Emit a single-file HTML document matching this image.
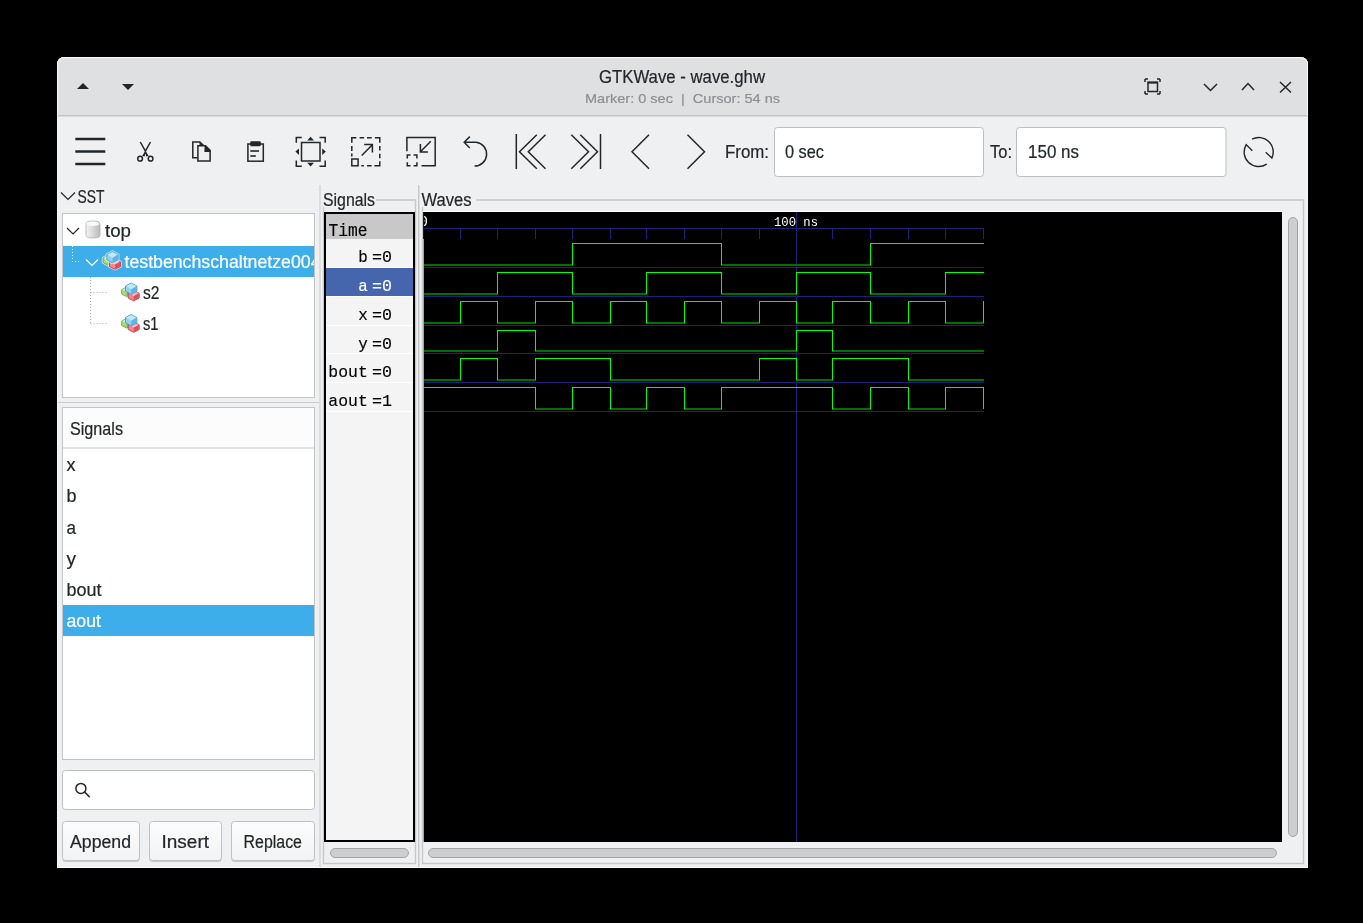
<!DOCTYPE html>
<html><head><meta charset="utf-8"><title>GTKWave</title>
<style>html,body{margin:0;padding:0;background:#000;width:1363px;height:923px;overflow:hidden}svg{display:block;will-change:transform}</style>
</head><body>
<svg width="1363" height="923" viewBox="0 0 1363 923" shape-rendering="auto">
<rect x="0" y="0" width="1363" height="923" fill="#000" />
<path d="M57,868 L57,65 Q57,57 65,57 L1300,57 Q1308,57 1308,65 L1308,868 Z" fill="#eff0f1"/>
<path d="M57,116 L57,65 Q57,57 65,57 L1300,57 Q1308,57 1308,65 L1308,116 Z" fill="#dfe0e2"/>
<rect x="57" y="115" width="1251" height="1.5" fill="#c4c5c7" />
<path d="M57.5,116 L57.5,65 Q57.5,57.5 65,57.5 L1300,57.5 Q1307.5,57.5 1307.5,65 L1307.5,116" fill="none" stroke="#ffffff" stroke-opacity="0.85"/>
<path d="M57.5,117 V868 M1307.5,117 V868" fill="none" stroke="#ffffff" stroke-opacity="0.5"/>
<path d="M77,89 L89,89 L83,83 Z" fill="#232629"/>
<path d="M122,84 L134,84 L128,90 Z" fill="#232629"/>
<text x="599" y="83" font-family='"Liberation Sans", sans-serif' font-size="17.5" fill="#232629" textLength="166" lengthAdjust="spacingAndGlyphs"  stroke="#232629" stroke-width="0.2" xml:space="preserve">GTKWave - wave.ghw</text>
<text x="585" y="103" font-family='"Liberation Sans", sans-serif' font-size="13.5" fill="#8c8e90" textLength="195" lengthAdjust="spacingAndGlyphs"  stroke="#8c8e90" stroke-width="0.2" xml:space="preserve">Marker: 0 sec  |  Cursor: 54 ns</text>
<rect x="1148" y="82.5" width="9.5" height="9" fill="none" stroke="#232629" stroke-width="1.5"/>
<rect x="1147.5" y="81.5" width="10.5" height="2" fill="#232629"/>
<path d="M1145,79 h3 M1145,79 v3 M1160,79 h-3 M1160,79 v3 M1145,94 h3 M1145,94 v-3 M1160,94 h-3 M1160,94 v-3" fill="none" stroke="#232629" stroke-width="1.5"/>
<path d="M1204,84 L1210.5,90.5 L1217,84" fill="none" stroke="#232629" stroke-width="1.5"/>
<path d="M1242,90 L1248,83.5 L1254,90" fill="none" stroke="#232629" stroke-width="1.5"/>
<path d="M1280,82 L1291,92.5 M1291,82 L1280,92.5" fill="none" stroke="#232629" stroke-width="1.5"/>
<rect x="57" y="867" width="1251" height="1" fill="#ffffff" />
<rect x="75.3" y="137.75" width="30" height="2.5" fill="#232629" />
<rect x="75.3" y="150.25" width="30" height="2.5" fill="#232629" />
<rect x="75.3" y="162.75" width="30" height="2.5" fill="#232629" />
<path d="M140.3,142 L145.4,151.2 L150.5,142" fill="none" stroke="#232629" stroke-width="1.5" stroke-linejoin="round"/>
<path d="M145.4,150.6 L148.6,156 L146.2,156.6 L145.4,153.6 L144.6,156.6 L142.2,156 Z" fill="#232629"/>
<circle cx="140.1" cy="158.7" r="2.35" fill="none" stroke="#232629" stroke-width="1.5"/><circle cx="150.6" cy="158.7" r="2.35" fill="none" stroke="#232629" stroke-width="1.5"/>
<path d="M197.5,157.7 L192.8,157.7 L192.8,141.9 L199.8,141.9 L203.5,145.6" fill="none" stroke="#232629" stroke-width="1.5"/>
<path d="M197.9,161.1 L197.9,145.8 L205.5,145.8 L210.1,150.4 L210.1,161.1 Z" fill="none" stroke="#232629" stroke-width="1.5"/>
<path d="M204.6,145 L210.9,151.3 L210.9,152 L204.4,152 Z" fill="#232629"/>
<path d="M199.5,141.2 L204.5,146 L199.5,146 Z" fill="#232629"/>
<rect x="247.9" y="144" width="15.4" height="17.2" fill="none" stroke="#232629" stroke-width="1.5"/>
<rect x="250.3" y="141.2" width="10.4" height="5" rx="1" fill="#232629"/>
<rect x="250.3" y="150.2" width="8.7" height="1.6" fill="#232629" />
<rect x="250.3" y="155.2" width="5.5" height="1.6" fill="#232629" />
<rect x="301.5" y="142.5" width="18.5" height="18.5" fill="none" stroke="#232629" stroke-width="1.5"/>
<path d="M296.3,142.8 V137.5 H301.8 M319.5,137.5 H325.2 V142.8 M296.3,160.4 V166.2 H301.8 M319.5,166.2 H325.2 V160.4" fill="none" stroke="#232629" stroke-width="1.5"/>
<path d="M307.2,140.4 L310.6,136.8 L314,140.4 Z M307.2,162.8 L310.6,166.6 L314,162.8 Z M299,148.4 L295.4,151.6 L299,155 Z M322.2,148.4 L325.8,151.6 L322.2,155 Z" fill="#232629"/>
<path d="M351.8,142.7 V137.8 H356.4 M359.6,137.8 H364.2 M367,137.8 H371.7 M374.9,137.8 H379.8 V142.7 M379.8,145.9 V150.5 M379.8,153.7 V158.3 M379.8,161.2 V165.8 H374.4 M371.7,165.8 H367 M363.9,165.8 H361.3 M351.8,145.9 V150.9 M351.8,153.4 V156.6" fill="none" stroke="#232629" stroke-width="1.5"/>
<rect x="351.8" y="159" width="6.3" height="6.8" fill="none" stroke="#232629" stroke-width="1.5"/>
<path d="M361.7,155.5 L372.4,144.8 M364.2,144.6 H372.4 V152.6" fill="none" stroke="#232629" stroke-width="1.5"/>
<path d="M406.9,151.2 V137.6 H435.2 V165.8 H421.5" fill="none" stroke="#232629" stroke-width="1.5"/>
<path d="M407.3,158.4 V155.1 H410.5 M413.6,155.1 H416.9 V158.4 M407.3,162.2 V165.8 H410.5 M413.6,165.8 H416.9 V162.2" fill="none" stroke="#232629" stroke-width="1.5"/>
<path d="M430.8,141.3 L420.4,151.8 M420.4,144.1 V152 H427.9" fill="none" stroke="#232629" stroke-width="1.5"/>
<path d="M464.5,142.3 H476.2 A11.95,11.95 0 0 1 474.6,166.1" fill="none" stroke="#232629" stroke-width="1.5"/>
<path d="M469.8,136.6 L464.2,142.3 L469.8,148" fill="none" stroke="#232629" stroke-width="1.5"/>
<path d="M516.3,134 V169 M536.8,134.7 L519.5,151.7 L536.8,168.7 M545.5,134.7 L528.3,151.7 L545.5,168.7" fill="none" stroke="#232629" stroke-width="1.5"/>
<path d="M600.5,134 V169 M571.3,134.7 L588.5,151.7 L571.3,168.7 M580.3,134.7 L597.5,151.7 L580.3,168.7" fill="none" stroke="#232629" stroke-width="1.5"/>
<path d="M649,134.7 L632,151.7 L649,168.7" fill="none" stroke="#232629" stroke-width="1.5"/>
<path d="M687.5,134.7 L704.5,151.7 L687.5,168.7" fill="none" stroke="#232629" stroke-width="1.5"/>
<text x="725" y="158" font-family='"Liberation Sans", sans-serif' font-size="17.5" fill="#232629" textLength="44" lengthAdjust="spacingAndGlyphs"  stroke="#232629" stroke-width="0.2" xml:space="preserve">From:</text>
<rect x="774.5" y="127.5" width="209" height="49" rx="3" fill="#fff" stroke="#bcbebf"/>
<text x="785" y="158" font-family='"Liberation Sans", sans-serif' font-size="17.5" fill="#232629" textLength="39" lengthAdjust="spacingAndGlyphs"  stroke="#232629" stroke-width="0.2" xml:space="preserve">0 sec</text>
<text x="990" y="158" font-family='"Liberation Sans", sans-serif' font-size="17.5" fill="#232629" textLength="22" lengthAdjust="spacingAndGlyphs"  stroke="#232629" stroke-width="0.2" xml:space="preserve">To:</text>
<rect x="1016.5" y="127.5" width="209.5" height="49" rx="3" fill="#fff" stroke="#bcbebf"/>
<text x="1028" y="158" font-family='"Liberation Sans", sans-serif' font-size="17.5" fill="#232629" textLength="51" lengthAdjust="spacingAndGlyphs"  stroke="#232629" stroke-width="0.2" xml:space="preserve">150 ns</text>
<path d="M1252.1,139.1 A14.5,14.5 0 0 1 1271.9,158 L1265.7,152.3 M1266.7,164.1 A14.5,14.5 0 0 1 1246.2,144.6 L1252.3,150.7" fill="none" stroke="#232629" stroke-width="1.4" stroke-linejoin="miter"/>
<rect x="319.5" y="185" width="1" height="682" fill="#c9cacb" />
<rect x="418" y="185" width="1" height="682" fill="#c6c7c8" />
<rect x="419" y="185" width="1" height="682" fill="#dcdddf" />
<path d="M61,192.5 L68,199.5 L75,192.5" fill="none" stroke="#232629" stroke-width="1.2"/>
<text x="77.5" y="203" font-family='"Liberation Sans", sans-serif' font-size="17.5" fill="#232629" textLength="27" lengthAdjust="spacingAndGlyphs"  stroke="#232629" stroke-width="0.2" xml:space="preserve">SST</text>
<rect x="62.5" y="213.5" width="252" height="184" fill="#fff" stroke="#c2c3c4"/>
<path d="M67,228 L73,234 L79,228" fill="none" stroke="#232629" stroke-width="1.2"/>
<defs><linearGradient id="db" x1="0" x2="1"><stop offset="0" stop-color="#f4f4f4"/><stop offset="0.5" stop-color="#d8d8d8"/><stop offset="1" stop-color="#b8b8b8"/></linearGradient><linearGradient id="btn" x1="0" y1="0" x2="0" y2="1"><stop offset="0" stop-color="#fcfcfc"/><stop offset="1" stop-color="#f2f3f4"/></linearGradient></defs>
<path d="M86,224 Q86,221 93,221 Q100,221 100,224 V235.5 Q100,238 93,238 Q86,238 86,235.5 Z" fill="url(#db)" stroke="#b0b0b0" stroke-width="0.8"/>
<ellipse cx="93" cy="223.8" rx="6.5" ry="2.2" fill="#fafafa"/>
<text x="105" y="236.5" font-family='"Liberation Sans", sans-serif' font-size="17.5" fill="#232629" textLength="26" lengthAdjust="spacingAndGlyphs"  stroke="#232629" stroke-width="0.2" xml:space="preserve">top</text>
<rect x="63" y="246" width="251" height="31" fill="#3daee9" />
<path d="M72.5,246 V261.5 H81" fill="none" stroke="#fff" stroke-width="1" stroke-dasharray="1,2" opacity="0.9"/>
<path d="M86,259.5 L92,265.5 L98,259.5" fill="none" stroke="#fff" stroke-width="1.2"/>
<g transform="translate(102.5,251.5) scale(1.0)"><path d="M5.25,4 L10.0,6.5920000000000005 L10.0,11.008 L5.25,13.6 L0.5,11.008 L0.5,6.5920000000000005 Z" fill="#fff" stroke="#fff" stroke-width="2.4" stroke-linejoin="round" opacity="0.75"/><path d="M5.25,4 L10.0,6.5920000000000005 L10.0,11.008 L5.25,13.6 L0.5,11.008 L0.5,6.5920000000000005 Z" fill="#a8d880" stroke="#70a848" stroke-width="0.9" stroke-linejoin="round"/><path d="M5.25,9.184000000000001 L9.6,6.5920000000000005 L9.6,11.008 L5.25,13.2 Z" fill="#88c058"/><path d="M5.25,4.6 L9.4,6.5920000000000005 L5.25,9.184000000000001 L1.1,6.5920000000000005 Z" fill="#d8f0c0"/><path d="M12.5,7.5 L18,10.281 L18,15.019 L12.5,17.8 L7,15.019 L7,10.281 Z" fill="#fff" stroke="#fff" stroke-width="2.4" stroke-linejoin="round" opacity="0.75"/><path d="M12.5,7.5 L18,10.281 L18,15.019 L12.5,17.8 L7,15.019 L7,10.281 Z" fill="#f28890" stroke="#c83848" stroke-width="0.9" stroke-linejoin="round"/><path d="M12.5,13.062000000000001 L17.6,10.281 L17.6,15.019 L12.5,17.400000000000002 Z" fill="#e0505c"/><path d="M12.5,8.1 L17.4,10.281 L12.5,13.062000000000001 L7.6,10.281 Z" fill="#f8b8bc"/><path d="M10.0,0 L15.7,3.0780000000000003 L15.7,8.322 L10.0,11.4 L4.3,8.322 L4.3,3.0780000000000003 Z" fill="#fff" stroke="#fff" stroke-width="2.4" stroke-linejoin="round" opacity="0.75"/><path d="M10.0,0 L15.7,3.0780000000000003 L15.7,8.322 L10.0,11.4 L4.3,8.322 L4.3,3.0780000000000003 Z" fill="#90d2f0" stroke="#3c9acc" stroke-width="0.9" stroke-linejoin="round"/><path d="M10.0,6.156000000000001 L15.299999999999999,3.0780000000000003 L15.299999999999999,8.322 L10.0,11.0 Z" fill="#5ab6e2"/><path d="M10.0,0.6 L15.1,3.0780000000000003 L10.0,6.156000000000001 L4.8999999999999995,3.0780000000000003 Z" fill="#c0e8f8"/></g>
<svg x="63" y="246" width="251" height="31" overflow="hidden">
<text x="61.5" y="22" font-family='"Liberation Sans", sans-serif' font-size="17.5" fill="#fff" textLength="196" lengthAdjust="spacingAndGlyphs"  stroke="#fff" stroke-width="0.2" xml:space="preserve">testbenchschaltnetze004</text>
</svg>
<path d="M90.5,277 V323.5 M90.5,292.5 H108.5 M90.5,323.5 H108.5" fill="none" stroke="#a8a8a8" stroke-width="1" stroke-dasharray="1,2"/>
<g transform="translate(121.2,283) scale(1.0)"><path d="M5.25,4 L10.0,6.5920000000000005 L10.0,11.008 L5.25,13.6 L0.5,11.008 L0.5,6.5920000000000005 Z" fill="#a8d880" stroke="#70a848" stroke-width="0.9" stroke-linejoin="round"/><path d="M5.25,9.184000000000001 L9.6,6.5920000000000005 L9.6,11.008 L5.25,13.2 Z" fill="#88c058"/><path d="M5.25,4.6 L9.4,6.5920000000000005 L5.25,9.184000000000001 L1.1,6.5920000000000005 Z" fill="#d8f0c0"/><path d="M12.5,7.5 L18,10.281 L18,15.019 L12.5,17.8 L7,15.019 L7,10.281 Z" fill="#f28890" stroke="#c83848" stroke-width="0.9" stroke-linejoin="round"/><path d="M12.5,13.062000000000001 L17.6,10.281 L17.6,15.019 L12.5,17.400000000000002 Z" fill="#e0505c"/><path d="M12.5,8.1 L17.4,10.281 L12.5,13.062000000000001 L7.6,10.281 Z" fill="#f8b8bc"/><path d="M10.0,0 L15.7,3.0780000000000003 L15.7,8.322 L10.0,11.4 L4.3,8.322 L4.3,3.0780000000000003 Z" fill="#90d2f0" stroke="#3c9acc" stroke-width="0.9" stroke-linejoin="round"/><path d="M10.0,6.156000000000001 L15.299999999999999,3.0780000000000003 L15.299999999999999,8.322 L10.0,11.0 Z" fill="#5ab6e2"/><path d="M10.0,0.6 L15.1,3.0780000000000003 L10.0,6.156000000000001 L4.8999999999999995,3.0780000000000003 Z" fill="#c0e8f8"/></g>
<text x="143" y="299" font-family='"Liberation Sans", sans-serif' font-size="17.5" fill="#232629" textLength="16.5" lengthAdjust="spacingAndGlyphs"  stroke="#232629" stroke-width="0.2" xml:space="preserve">s2</text>
<g transform="translate(121.2,314.5) scale(1.0)"><path d="M5.25,4 L10.0,6.5920000000000005 L10.0,11.008 L5.25,13.6 L0.5,11.008 L0.5,6.5920000000000005 Z" fill="#a8d880" stroke="#70a848" stroke-width="0.9" stroke-linejoin="round"/><path d="M5.25,9.184000000000001 L9.6,6.5920000000000005 L9.6,11.008 L5.25,13.2 Z" fill="#88c058"/><path d="M5.25,4.6 L9.4,6.5920000000000005 L5.25,9.184000000000001 L1.1,6.5920000000000005 Z" fill="#d8f0c0"/><path d="M12.5,7.5 L18,10.281 L18,15.019 L12.5,17.8 L7,15.019 L7,10.281 Z" fill="#f28890" stroke="#c83848" stroke-width="0.9" stroke-linejoin="round"/><path d="M12.5,13.062000000000001 L17.6,10.281 L17.6,15.019 L12.5,17.400000000000002 Z" fill="#e0505c"/><path d="M12.5,8.1 L17.4,10.281 L12.5,13.062000000000001 L7.6,10.281 Z" fill="#f8b8bc"/><path d="M10.0,0 L15.7,3.0780000000000003 L15.7,8.322 L10.0,11.4 L4.3,8.322 L4.3,3.0780000000000003 Z" fill="#90d2f0" stroke="#3c9acc" stroke-width="0.9" stroke-linejoin="round"/><path d="M10.0,6.156000000000001 L15.299999999999999,3.0780000000000003 L15.299999999999999,8.322 L10.0,11.0 Z" fill="#5ab6e2"/><path d="M10.0,0.6 L15.1,3.0780000000000003 L10.0,6.156000000000001 L4.8999999999999995,3.0780000000000003 Z" fill="#c0e8f8"/></g>
<text x="143" y="330" font-family='"Liberation Sans", sans-serif' font-size="17.5" fill="#232629" textLength="15.5" lengthAdjust="spacingAndGlyphs"  stroke="#232629" stroke-width="0.2" xml:space="preserve">s1</text>
<rect x="58" y="402" width="261" height="1" fill="#c9cacb" />
<rect x="62.5" y="407.5" width="252" height="352" fill="#fff" stroke="#c2c3c4"/>
<rect x="63" y="408" width="251" height="40" fill="#fcfcfc" />
<rect x="63" y="447.5" width="251" height="1" fill="#c6c7c8" />
<text x="70" y="435" font-family='"Liberation Sans", sans-serif' font-size="17.5" fill="#232629" textLength="53" lengthAdjust="spacingAndGlyphs"  stroke="#232629" stroke-width="0.2" xml:space="preserve">Signals</text>
<text x="66.5" y="471.0" font-family='"Liberation Sans", sans-serif' font-size="17.5" fill="#232629" textLength="9" lengthAdjust="spacingAndGlyphs"  stroke="#232629" stroke-width="0.2" xml:space="preserve">x</text>
<text x="66.5" y="502.25" font-family='"Liberation Sans", sans-serif' font-size="17.5" fill="#232629" textLength="10" lengthAdjust="spacingAndGlyphs"  stroke="#232629" stroke-width="0.2" xml:space="preserve">b</text>
<text x="66.5" y="533.5" font-family='"Liberation Sans", sans-serif' font-size="17.5" fill="#232629" textLength="9.5" lengthAdjust="spacingAndGlyphs"  stroke="#232629" stroke-width="0.2" xml:space="preserve">a</text>
<text x="66.5" y="564.75" font-family='"Liberation Sans", sans-serif' font-size="17.5" fill="#232629" textLength="9.5" lengthAdjust="spacingAndGlyphs"  stroke="#232629" stroke-width="0.2" xml:space="preserve">y</text>
<text x="66.5" y="596.0" font-family='"Liberation Sans", sans-serif' font-size="17.5" fill="#232629" textLength="35" lengthAdjust="spacingAndGlyphs"  stroke="#232629" stroke-width="0.2" xml:space="preserve">bout</text>
<rect x="63" y="605" width="251" height="31" fill="#3daee9" />
<text x="66.5" y="627.25" font-family='"Liberation Sans", sans-serif' font-size="17.5" fill="#fff" textLength="34.5" lengthAdjust="spacingAndGlyphs"  stroke="#fff" stroke-width="0.2" xml:space="preserve">aout</text>
<rect x="62.5" y="770.5" width="252" height="39" rx="3" fill="#fff" stroke="#bcbebf"/>
<circle cx="80.9" cy="788.4" r="5" fill="none" stroke="#232629" stroke-width="1.5"/><path d="M84.4,791.9 L89.8,797.3" fill="none" stroke="#232629" stroke-width="1.5"/>
<rect x="62.5" y="822" width="77" height="40" rx="3" fill="#c7c8c9"/>
<rect x="62.5" y="821.5" width="77" height="39" rx="3" fill="url(#btn)" stroke="#bfc0c2"/>
<text x="70" y="848" font-family='"Liberation Sans", sans-serif' font-size="17.5" fill="#232629" textLength="61" lengthAdjust="spacingAndGlyphs"  stroke="#232629" stroke-width="0.2" xml:space="preserve">Append</text>
<rect x="149.5" y="822" width="72" height="40" rx="3" fill="#c7c8c9"/>
<rect x="149.5" y="821.5" width="72" height="39" rx="3" fill="url(#btn)" stroke="#bfc0c2"/>
<text x="161.5" y="848" font-family='"Liberation Sans", sans-serif' font-size="17.5" fill="#232629" textLength="47.5" lengthAdjust="spacingAndGlyphs"  stroke="#232629" stroke-width="0.2" xml:space="preserve">Insert</text>
<rect x="231.5" y="822" width="83" height="40" rx="3" fill="#c7c8c9"/>
<rect x="231.5" y="821.5" width="83" height="39" rx="3" fill="url(#btn)" stroke="#bfc0c2"/>
<text x="243.5" y="848" font-family='"Liberation Sans", sans-serif' font-size="17.5" fill="#232629" textLength="58.5" lengthAdjust="spacingAndGlyphs"  stroke="#232629" stroke-width="0.2" xml:space="preserve">Replace</text>
<path d="M323.5,207 V863.5 H415.5 V200 H376" fill="none" stroke="#c6c7c8" stroke-width="1.4"/>
<text x="323" y="206" font-family='"Liberation Sans", sans-serif' font-size="17.5" fill="#232629" textLength="52" lengthAdjust="spacingAndGlyphs"  stroke="#232629" stroke-width="0.2" xml:space="preserve">Signals</text>
<rect x="324" y="212" width="91" height="630" fill="#000" />
<rect x="326" y="214" width="87" height="626" fill="#f4f4f4" />
<rect x="326" y="214" width="87" height="25" fill="#c8c8c8" />
<text x="328.5" y="235.5" font-family='"Liberation Mono", monospace' font-size="17.5" fill="#000" textLength="39" lengthAdjust="spacingAndGlyphs" stroke="#000" stroke-width="0.15" xml:space="preserve">Time</text>
<rect x="326" y="267" width="87" height="1" fill="#ffffff" />
<text x="367.8" y="261.5" font-family='"Liberation Mono", monospace' font-size="17" fill="#000" textLength="9.5" lengthAdjust="spacingAndGlyphs" text-anchor="end" stroke="#000" stroke-width="0.15" xml:space="preserve">b</text>
<text x="372" y="261.5" font-family='"Liberation Mono", monospace' font-size="17" fill="#000" textLength="20" lengthAdjust="spacingAndGlyphs" stroke="#000" stroke-width="0.15" xml:space="preserve">=0</text>
<rect x="326" y="296" width="87" height="1" fill="#ffffff" />
<rect x="326" y="268" width="87" height="28" fill="#4565ad" />
<text x="367.8" y="290.5" font-family='"Liberation Mono", monospace' font-size="17" fill="#fff" textLength="9.5" lengthAdjust="spacingAndGlyphs" text-anchor="end" stroke="#fff" stroke-width="0.15" xml:space="preserve">a</text>
<text x="372" y="290.5" font-family='"Liberation Mono", monospace' font-size="17" fill="#fff" textLength="20" lengthAdjust="spacingAndGlyphs" stroke="#fff" stroke-width="0.15" xml:space="preserve">=0</text>
<rect x="326" y="325" width="87" height="1" fill="#ffffff" />
<text x="367.8" y="319.5" font-family='"Liberation Mono", monospace' font-size="17" fill="#000" textLength="9.5" lengthAdjust="spacingAndGlyphs" text-anchor="end" stroke="#000" stroke-width="0.15" xml:space="preserve">x</text>
<text x="372" y="319.5" font-family='"Liberation Mono", monospace' font-size="17" fill="#000" textLength="20" lengthAdjust="spacingAndGlyphs" stroke="#000" stroke-width="0.15" xml:space="preserve">=0</text>
<rect x="326" y="353" width="87" height="1" fill="#ffffff" />
<text x="367.8" y="348.5" font-family='"Liberation Mono", monospace' font-size="17" fill="#000" textLength="9.5" lengthAdjust="spacingAndGlyphs" text-anchor="end" stroke="#000" stroke-width="0.15" xml:space="preserve">y</text>
<text x="372" y="348.5" font-family='"Liberation Mono", monospace' font-size="17" fill="#000" textLength="20" lengthAdjust="spacingAndGlyphs" stroke="#000" stroke-width="0.15" xml:space="preserve">=0</text>
<rect x="326" y="382" width="87" height="1" fill="#ffffff" />
<text x="367.8" y="376.5" font-family='"Liberation Mono", monospace' font-size="17" fill="#000" textLength="39.5" lengthAdjust="spacingAndGlyphs" text-anchor="end" stroke="#000" stroke-width="0.15" xml:space="preserve">bout</text>
<text x="372" y="376.5" font-family='"Liberation Mono", monospace' font-size="17" fill="#000" textLength="20" lengthAdjust="spacingAndGlyphs" stroke="#000" stroke-width="0.15" xml:space="preserve">=0</text>
<rect x="326" y="411" width="87" height="1" fill="#ffffff" />
<text x="367.8" y="405.5" font-family='"Liberation Mono", monospace' font-size="17" fill="#000" textLength="39.5" lengthAdjust="spacingAndGlyphs" text-anchor="end" stroke="#000" stroke-width="0.15" xml:space="preserve">aout</text>
<text x="372" y="405.5" font-family='"Liberation Mono", monospace' font-size="17" fill="#000" textLength="20" lengthAdjust="spacingAndGlyphs" stroke="#000" stroke-width="0.15" xml:space="preserve">=1</text>
<rect x="330.5" y="848.5" width="78" height="9" rx="4.5" fill="#cdcecf" stroke="#a3a4a5"/>
<path d="M422.5,207 V863.5 H1303.5 V200 H476" fill="none" stroke="#c6c7c8" stroke-width="1.4"/>
<text x="421.5" y="206" font-family='"Liberation Sans", sans-serif' font-size="17.5" fill="#232629" textLength="50" lengthAdjust="spacingAndGlyphs"  stroke="#232629" stroke-width="0.2" xml:space="preserve">Waves</text>
<rect x="423" y="212" width="859" height="630" fill="#000" />
<rect x="423" y="211" width="859" height="1" fill="#ffffff" />
<svg x="423" y="212" width="40" height="20" overflow="hidden">
<text x="-4" y="14" font-family='"Liberation Mono", monospace' font-size="14" fill="#fff" textLength="9" lengthAdjust="spacingAndGlyphs"  xml:space="preserve">0</text>
</svg>
<text x="774" y="226" font-family='"Liberation Mono", monospace' font-size="13" fill="#fff" textLength="44" lengthAdjust="spacingAndGlyphs"  xml:space="preserve">100 ns</text>
<rect x="423" y="228" width="561" height="1" fill="#20207c" />
<rect x="423" y="228" width="1" height="11" fill="#20207c" />
<rect x="460" y="228" width="1" height="11" fill="#20207c" />
<rect x="497" y="228" width="1" height="11" fill="#20207c" />
<rect x="535" y="228" width="1" height="11" fill="#20207c" />
<rect x="572" y="228" width="1" height="11" fill="#20207c" />
<rect x="610" y="228" width="1" height="11" fill="#20207c" />
<rect x="646" y="228" width="1" height="11" fill="#20207c" />
<rect x="684" y="228" width="1" height="11" fill="#20207c" />
<rect x="721" y="228" width="1" height="11" fill="#20207c" />
<rect x="759" y="228" width="1" height="11" fill="#20207c" />
<rect x="796" y="228" width="1" height="11" fill="#20207c" />
<rect x="832" y="228" width="1" height="11" fill="#20207c" />
<rect x="870" y="228" width="1" height="11" fill="#20207c" />
<rect x="908" y="228" width="1" height="11" fill="#20207c" />
<rect x="945" y="228" width="1" height="11" fill="#20207c" />
<rect x="983" y="228" width="1" height="11" fill="#20207c" />
<rect x="796" y="212" width="1" height="630" fill="#20207c" />
<rect x="423" y="267" width="561" height="1" fill="#20207c" />
<rect x="423" y="296" width="561" height="1" fill="#20207c" />
<rect x="423" y="325" width="561" height="1" fill="#20207c" />
<rect x="423" y="353" width="561" height="1" fill="#20207c" />
<rect x="423" y="382" width="561" height="1" fill="#20207c" />
<rect x="423" y="411" width="561" height="1" fill="#20207c" />
<rect x="423" y="264" width="38" height="2" fill="#007000" />
<rect x="460" y="264" width="38" height="2" fill="#007000" />
<rect x="497" y="264" width="39" height="2" fill="#007000" />
<rect x="535" y="264" width="38" height="2" fill="#007000" />
<rect x="572" y="243" width="39" height="1" fill="#00ff00" />
<rect x="572" y="243" width="1" height="22" fill="#00ff00" />
<rect x="610" y="243" width="37" height="1" fill="#00ff00" />
<rect x="646" y="243" width="39" height="1" fill="#00ff00" />
<rect x="684" y="243" width="38" height="1" fill="#00ff00" />
<rect x="721" y="264" width="39" height="2" fill="#007000" />
<rect x="721" y="243" width="1" height="22" fill="#00ff00" />
<rect x="759" y="264" width="38" height="2" fill="#007000" />
<rect x="796" y="264" width="37" height="2" fill="#007000" />
<rect x="832" y="264" width="39" height="2" fill="#007000" />
<rect x="870" y="243" width="39" height="1" fill="#00ff00" />
<rect x="870" y="243" width="1" height="22" fill="#00ff00" />
<rect x="908" y="243" width="38" height="1" fill="#00ff00" />
<rect x="945" y="243" width="39" height="1" fill="#00ff00" />
<rect x="423" y="293" width="38" height="2" fill="#007000" />
<rect x="460" y="293" width="38" height="2" fill="#007000" />
<rect x="497" y="272" width="39" height="1" fill="#00ff00" />
<rect x="497" y="272" width="1" height="22" fill="#00ff00" />
<rect x="535" y="272" width="38" height="1" fill="#00ff00" />
<rect x="572" y="293" width="39" height="2" fill="#007000" />
<rect x="572" y="272" width="1" height="22" fill="#00ff00" />
<rect x="610" y="293" width="37" height="2" fill="#007000" />
<rect x="646" y="272" width="39" height="1" fill="#00ff00" />
<rect x="646" y="272" width="1" height="22" fill="#00ff00" />
<rect x="684" y="272" width="38" height="1" fill="#00ff00" />
<rect x="721" y="293" width="39" height="2" fill="#007000" />
<rect x="721" y="272" width="1" height="22" fill="#00ff00" />
<rect x="759" y="293" width="38" height="2" fill="#007000" />
<rect x="796" y="272" width="37" height="1" fill="#00ff00" />
<rect x="796" y="272" width="1" height="22" fill="#00ff00" />
<rect x="832" y="272" width="39" height="1" fill="#00ff00" />
<rect x="870" y="293" width="39" height="2" fill="#007000" />
<rect x="870" y="272" width="1" height="22" fill="#00ff00" />
<rect x="908" y="293" width="38" height="2" fill="#007000" />
<rect x="945" y="272" width="39" height="1" fill="#00ff00" />
<rect x="945" y="272" width="1" height="22" fill="#00ff00" />
<rect x="423" y="322" width="38" height="2" fill="#007000" />
<rect x="460" y="301" width="38" height="1" fill="#00ff00" />
<rect x="460" y="301" width="1" height="22" fill="#00ff00" />
<rect x="497" y="322" width="39" height="2" fill="#007000" />
<rect x="497" y="301" width="1" height="22" fill="#00ff00" />
<rect x="535" y="301" width="38" height="1" fill="#00ff00" />
<rect x="535" y="301" width="1" height="22" fill="#00ff00" />
<rect x="572" y="322" width="39" height="2" fill="#007000" />
<rect x="572" y="301" width="1" height="22" fill="#00ff00" />
<rect x="610" y="301" width="37" height="1" fill="#00ff00" />
<rect x="610" y="301" width="1" height="22" fill="#00ff00" />
<rect x="646" y="322" width="39" height="2" fill="#007000" />
<rect x="646" y="301" width="1" height="22" fill="#00ff00" />
<rect x="684" y="301" width="38" height="1" fill="#00ff00" />
<rect x="684" y="301" width="1" height="22" fill="#00ff00" />
<rect x="721" y="322" width="39" height="2" fill="#007000" />
<rect x="721" y="301" width="1" height="22" fill="#00ff00" />
<rect x="759" y="301" width="38" height="1" fill="#00ff00" />
<rect x="759" y="301" width="1" height="22" fill="#00ff00" />
<rect x="796" y="322" width="37" height="2" fill="#007000" />
<rect x="796" y="301" width="1" height="22" fill="#00ff00" />
<rect x="832" y="301" width="39" height="1" fill="#00ff00" />
<rect x="832" y="301" width="1" height="22" fill="#00ff00" />
<rect x="870" y="322" width="39" height="2" fill="#007000" />
<rect x="870" y="301" width="1" height="22" fill="#00ff00" />
<rect x="908" y="301" width="38" height="1" fill="#00ff00" />
<rect x="908" y="301" width="1" height="22" fill="#00ff00" />
<rect x="945" y="322" width="39" height="2" fill="#007000" />
<rect x="945" y="301" width="1" height="22" fill="#00ff00" />
<rect x="983" y="301" width="1" height="22" fill="#00ff00" />
<rect x="423" y="350" width="38" height="2" fill="#007000" />
<rect x="460" y="350" width="38" height="2" fill="#007000" />
<rect x="497" y="330" width="39" height="1" fill="#00ff00" />
<rect x="497" y="330" width="1" height="21" fill="#00ff00" />
<rect x="535" y="350" width="38" height="2" fill="#007000" />
<rect x="535" y="330" width="1" height="21" fill="#00ff00" />
<rect x="572" y="350" width="39" height="2" fill="#007000" />
<rect x="610" y="350" width="37" height="2" fill="#007000" />
<rect x="646" y="350" width="39" height="2" fill="#007000" />
<rect x="684" y="350" width="38" height="2" fill="#007000" />
<rect x="721" y="350" width="39" height="2" fill="#007000" />
<rect x="759" y="350" width="38" height="2" fill="#007000" />
<rect x="796" y="330" width="37" height="1" fill="#00ff00" />
<rect x="796" y="330" width="1" height="21" fill="#00ff00" />
<rect x="832" y="350" width="39" height="2" fill="#007000" />
<rect x="832" y="330" width="1" height="21" fill="#00ff00" />
<rect x="870" y="350" width="39" height="2" fill="#007000" />
<rect x="908" y="350" width="38" height="2" fill="#007000" />
<rect x="945" y="350" width="39" height="2" fill="#007000" />
<rect x="423" y="379" width="38" height="2" fill="#007000" />
<rect x="460" y="358" width="38" height="1" fill="#00ff00" />
<rect x="460" y="358" width="1" height="22" fill="#00ff00" />
<rect x="497" y="379" width="39" height="2" fill="#007000" />
<rect x="497" y="358" width="1" height="22" fill="#00ff00" />
<rect x="535" y="358" width="38" height="1" fill="#00ff00" />
<rect x="535" y="358" width="1" height="22" fill="#00ff00" />
<rect x="572" y="358" width="39" height="1" fill="#00ff00" />
<rect x="610" y="379" width="37" height="2" fill="#007000" />
<rect x="610" y="358" width="1" height="22" fill="#00ff00" />
<rect x="646" y="379" width="39" height="2" fill="#007000" />
<rect x="684" y="379" width="38" height="2" fill="#007000" />
<rect x="721" y="379" width="39" height="2" fill="#007000" />
<rect x="759" y="358" width="38" height="1" fill="#00ff00" />
<rect x="759" y="358" width="1" height="22" fill="#00ff00" />
<rect x="796" y="379" width="37" height="2" fill="#007000" />
<rect x="796" y="358" width="1" height="22" fill="#00ff00" />
<rect x="832" y="358" width="39" height="1" fill="#00ff00" />
<rect x="832" y="358" width="1" height="22" fill="#00ff00" />
<rect x="870" y="358" width="39" height="1" fill="#00ff00" />
<rect x="908" y="379" width="38" height="2" fill="#007000" />
<rect x="908" y="358" width="1" height="22" fill="#00ff00" />
<rect x="945" y="379" width="39" height="2" fill="#007000" />
<rect x="423" y="387" width="38" height="1" fill="#00ff00" />
<rect x="460" y="387" width="38" height="1" fill="#00ff00" />
<rect x="497" y="387" width="39" height="1" fill="#00ff00" />
<rect x="535" y="408" width="38" height="2" fill="#007000" />
<rect x="535" y="387" width="1" height="22" fill="#00ff00" />
<rect x="572" y="387" width="39" height="1" fill="#00ff00" />
<rect x="572" y="387" width="1" height="22" fill="#00ff00" />
<rect x="610" y="408" width="37" height="2" fill="#007000" />
<rect x="610" y="387" width="1" height="22" fill="#00ff00" />
<rect x="646" y="387" width="39" height="1" fill="#00ff00" />
<rect x="646" y="387" width="1" height="22" fill="#00ff00" />
<rect x="684" y="408" width="38" height="2" fill="#007000" />
<rect x="684" y="387" width="1" height="22" fill="#00ff00" />
<rect x="721" y="387" width="39" height="1" fill="#00ff00" />
<rect x="721" y="387" width="1" height="22" fill="#00ff00" />
<rect x="759" y="387" width="38" height="1" fill="#00ff00" />
<rect x="796" y="387" width="37" height="1" fill="#00ff00" />
<rect x="832" y="408" width="39" height="2" fill="#007000" />
<rect x="832" y="387" width="1" height="22" fill="#00ff00" />
<rect x="870" y="387" width="39" height="1" fill="#00ff00" />
<rect x="870" y="387" width="1" height="22" fill="#00ff00" />
<rect x="908" y="408" width="38" height="2" fill="#007000" />
<rect x="908" y="387" width="1" height="22" fill="#00ff00" />
<rect x="945" y="387" width="39" height="1" fill="#00ff00" />
<rect x="945" y="387" width="1" height="22" fill="#00ff00" />
<rect x="983" y="387" width="1" height="22" fill="#00ff00" />
<rect x="423" y="239" width="1" height="603" fill="#ff8080" />
<rect x="423" y="212" width="1" height="27" fill="#101060" />
<rect x="1288.5" y="217.5" width="9" height="619" rx="4.5" fill="#cdcecf" stroke="#a3a4a5"/>
<rect x="428.5" y="848.5" width="848" height="9" rx="4.5" fill="#cdcecf" stroke="#a3a4a5"/>
</svg>
</body></html>
